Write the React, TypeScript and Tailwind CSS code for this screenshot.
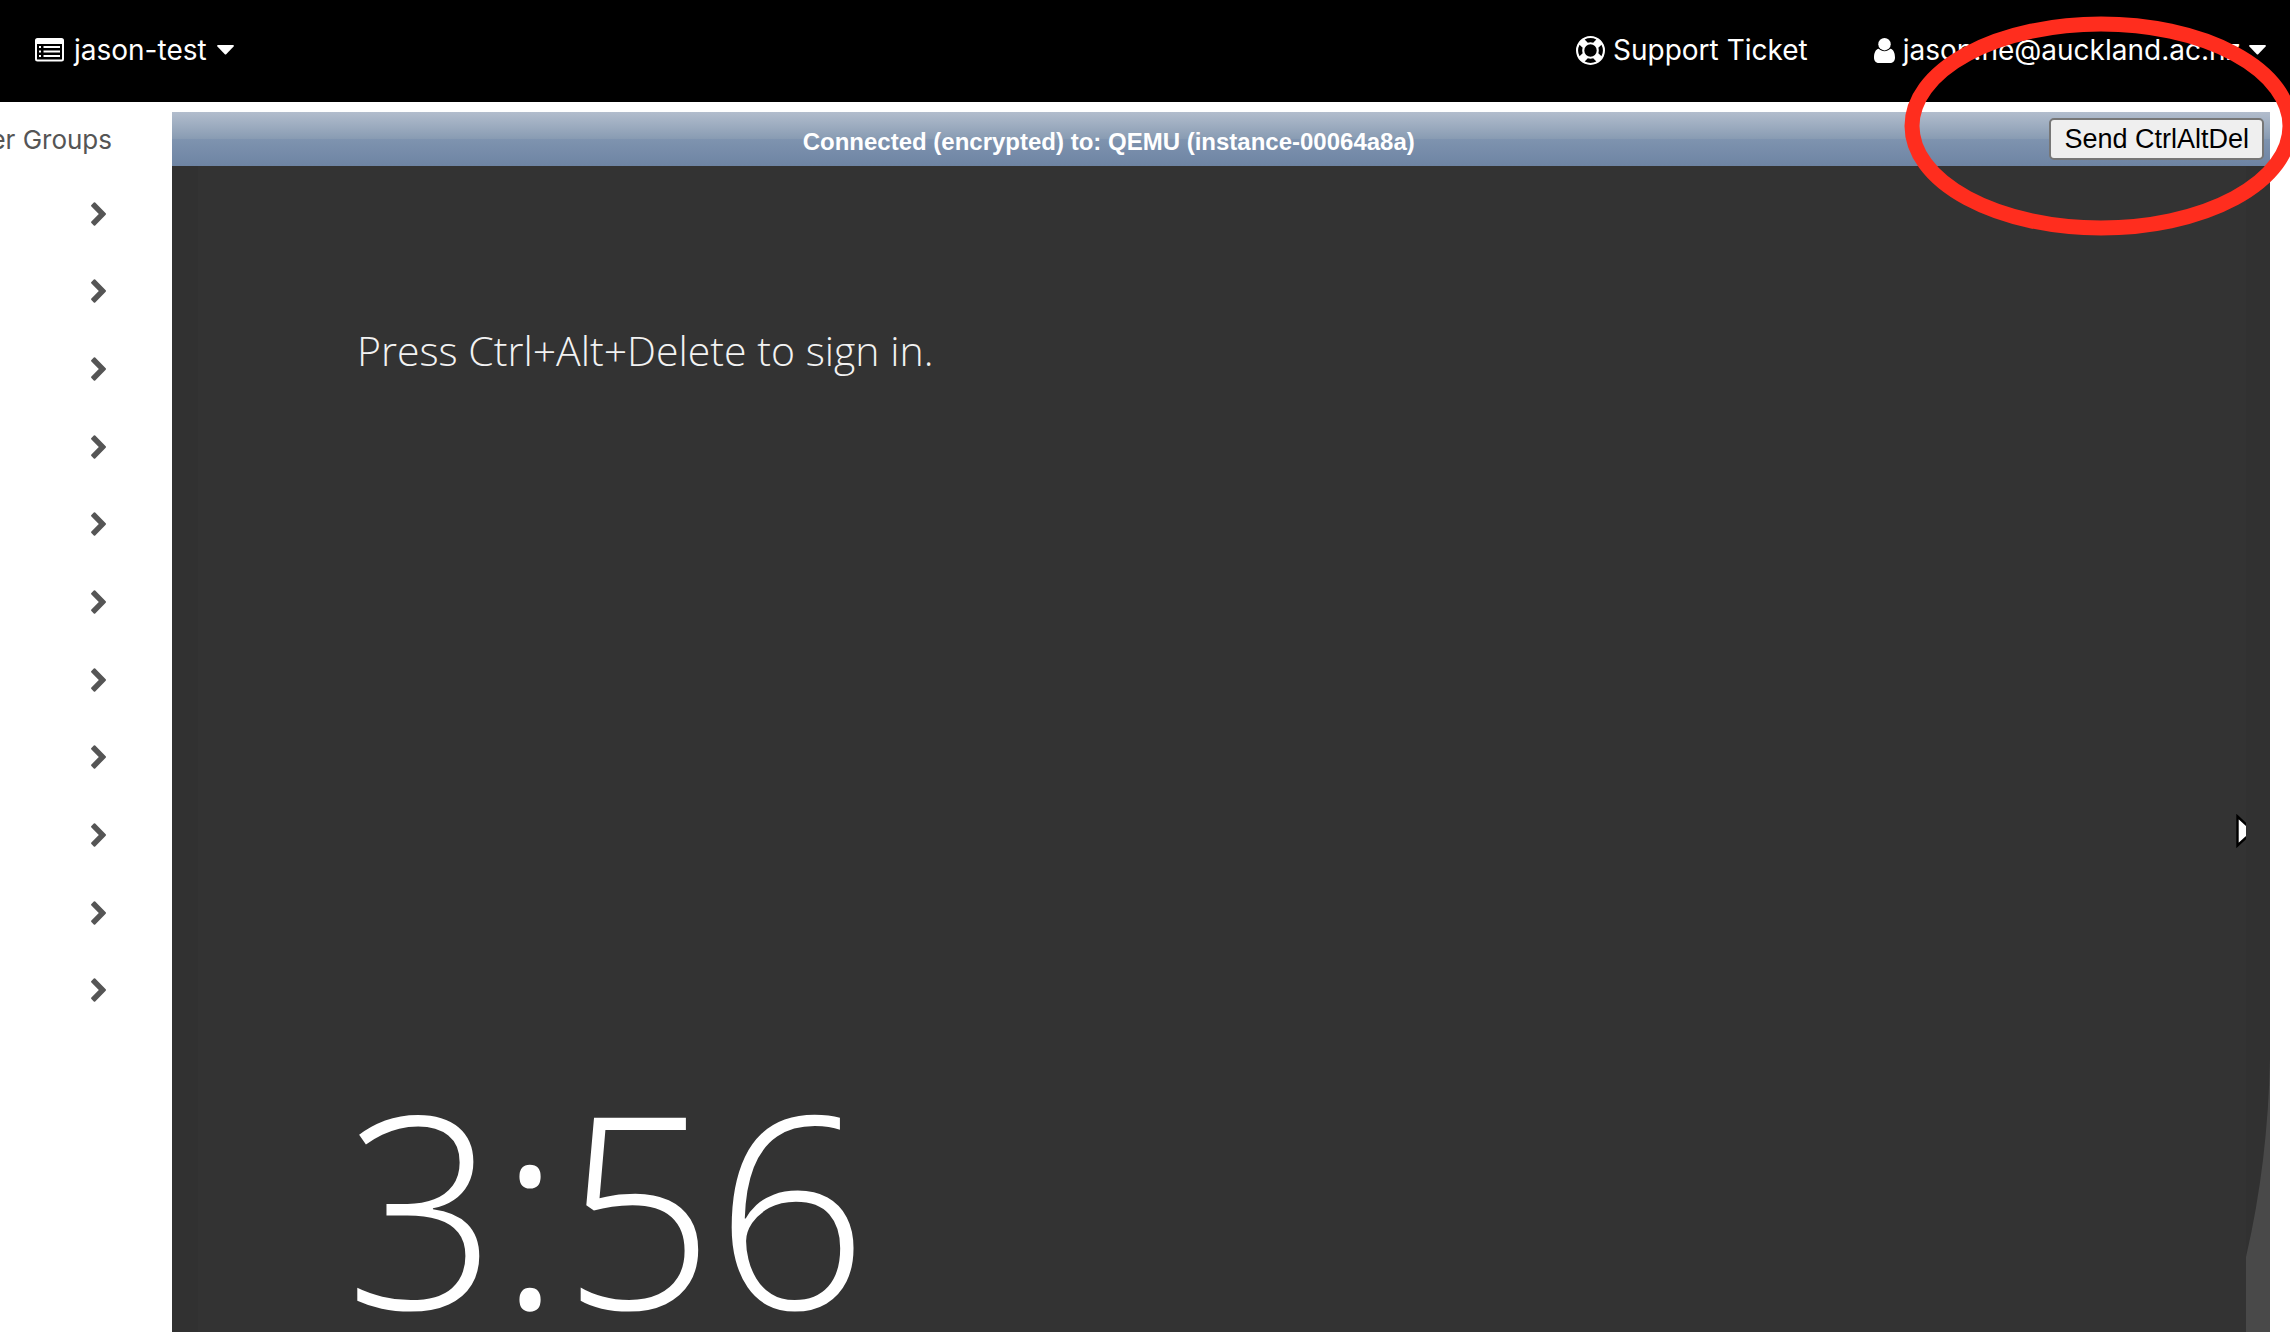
import React from "react";

const sidebarGroups = Array.from({ length: 11 }, (_, i) => i);

function ListIcon() {
  return (
    <svg viewBox="0 0 29 24" className="h-6 w-[29px]" fill="currentColor" aria-hidden="true">
      <path
        fillRule="evenodd"
        d="M2.500 0H26.500A2.500 2.500 0 0 1 29 2.500V21A2.500 2.500 0 0 1 26.500 23.500H2.500A2.500 2.500 0 0 1 0 21V2.500A2.500 2.500 0 0 1 2.500 0ZM2 6V21Q2 21.600 2.600 21.600H26.400Q27 21.600 27 21V6Z"
      />
      <path d="M4 8h2v2H4zM4 12.500h2v2H4zM4 17h2v2H4zM8.500 8h16.500v2H8.500zM8.500 12.500h16.500v2H8.500zM8.500 17h16.500v2H8.500z" />
    </svg>
  );
}

function LifeRingIcon() {
  return (
    <svg viewBox="0 0 1792 1792" className="h-[29px] w-[29px]" fill="currentColor" aria-hidden="true">
      <path d="M896 0q182 0 348 71t286 191 191 286 71 348-71 348-191 286-286 191-348 71-348-71-286-191-191-286-71-348 71-348 191-286 286-191 348-71zm0 128q-190 0-361 90l194 194q82-28 167-28t167 28l194-194q-171-90-361-90zm-678 1129l194-194q-28-82-28-167t28-167l-194-194q-90 171-90 361t90 361zm678 407q190 0 361-90l-194-194q-82 28-167 28t-167-28l-194 194q171 90 361 90zm0-384q159 0 271.500-112.500t112.500-271.500-112.500-271.500-271.500-112.500-271.500 112.500-112.500 271.500 112.500 271.500 271.500 112.500zm484-217l194 194q90-171 90-361t-90-361l-194 194q28 82 28 167t-28 167z" />
    </svg>
  );
}

function UserIcon() {
  return (
    <svg viewBox="0 0 21 25" className="h-[25px] w-[21px]" fill="currentColor" aria-hidden="true">
      <circle cx="10.500" cy="6.200" r="6.200" />
      <path d="M4.700 10.700C1.500 11.200 0 15 0 19.500C0 22.800 2 25 4.700 25H16.300C19 25 21 22.800 21 19.500C21 15 19.500 11.200 16.300 10.700C14.700 12.300 12.700 13.200 10.500 13.200S6.300 12.300 4.700 10.700Z" />
    </svg>
  );
}

function CaretIcon() {
  return (
    <svg viewBox="0 0 17 10" className="h-[10px] w-[17px]" fill="currentColor" aria-hidden="true">
      <path d="M1 0H16Q17.400 .3 16.600 1.500L9.200 9.200Q8.500 9.800 7.800 9.200L.4 1.500Q-.4 .3 1 0Z" />
    </svg>
  );
}

function ChevronIcon() {
  return (
    <svg viewBox="0 0 15 24" className="h-6 w-[15px]" fill="currentColor" aria-hidden="true">
      <path d="M2.800 .6Q3.500 0 4.200 .6L14.700 11.300Q15.300 12 14.700 12.700L4.200 23.400Q3.500 24 2.800 23.400L.4 20.900Q-.3 20.200 .4 19.500L7.800 12L.4 4.500Q-.3 3.800 .4 3.100Z" />
    </svg>
  );
}

function PointerIcon() {
  return (
    <svg viewBox="0 0 10 34" className="absolute right-0 top-[648px] h-[34px] w-[10px]" aria-hidden="true">
      <path d="M1.500 2.500L14 14V20L1.500 31.500Z" fill="#ffffff" stroke="#000000" strokeWidth="2.400" />
    </svg>
  );
}

function Highlight() {
  return (
    <svg
      viewBox="0 0 394 220"
      className="pointer-events-none absolute -right-2 top-4 z-10 h-[220px] w-[394px]"
      fill="none"
      stroke="#ff2d1e"
      strokeWidth="15"
      aria-hidden="true"
    >
      <ellipse cx="197" cy="110" rx="189" ry="102" />
    </svg>
  );
}

export default function App() {
  return (
    <div className="relative flex h-screen flex-col overflow-hidden bg-white font-['Inter',sans-serif]">
      <header className="flex h-[102px] shrink-0 items-center justify-between bg-black pb-[2px] pl-[35px] pr-6 text-[28px] leading-8 text-white">
        <button type="button" className="flex items-center gap-[10px]">
          <ListIcon />
          <span>jason-test</span>
          <CaretIcon />
        </button>
        <nav className="flex items-center gap-[66px]">
          <a href="#support" className="flex items-center gap-2">
            <LifeRingIcon />
            <span>Support Ticket</span>
          </a>
          <button type="button" className="flex items-center gap-2">
            <UserIcon />
            <span>jason.he@auckland.ac.nz</span>
            <CaretIcon />
          </button>
        </nav>
      </header>

      <div className="flex min-h-0 flex-1">
        <aside className="w-[172px] shrink-0 overflow-hidden text-[#555555]">
          <h2 className="flex h-[73px] items-center justify-end whitespace-nowrap pr-[60px] pt-[2px] text-[26px]">
            er Groups
          </h2>
          <ul className="grid h-[854px] auto-rows-fr pr-[66px]">
            {sidebarGroups.map((i) => (
              <li key={i} className="flex items-center justify-end">
                <button type="button" aria-label="Expand group">
                  <ChevronIcon />
                </button>
              </li>
            ))}
          </ul>
        </aside>

        <main className="mr-5 mt-[10px] flex min-w-0 flex-1 flex-col">
          <div className="grid h-[54px] shrink-0 grid-cols-[1fr_auto] items-center bg-[linear-gradient(to_bottom,#b2bdcd_0%,#899cb3_49%,#7e93af_51%,#6e84a3_100%)] pr-[6px] font-['Liberation_Sans',sans-serif]">
            <p className="pr-1 pt-[6px] text-center text-2xl font-bold text-white">
              Connected (encrypted) to: QEMU (instance-00064a8a)
            </p>
            <button
              type="button"
              className="h-[42px] rounded-[5px] border-2 border-[#767676] bg-[#efefef] px-[13px] text-[27px] leading-8 text-black"
            >
              Send CtrlAltDel
            </button>
          </div>
          <div className="flex min-h-0 flex-1 bg-[#313131]">
            <section className="relative ml-[26px] flex min-w-0 flex-1 flex-col justify-between bg-[#333333] pl-[147px] font-['Open_Sans',sans-serif] font-light">
              <p className="pl-3 pt-[154px] text-[41px] font-[350] leading-[60px] text-[#f2f2f2]">
                Press Ctrl+Alt+Delete to sign in.
              </p>
              <p className="pb-[6px] text-[268px] leading-[240px] text-white">3:56</p>
              <PointerIcon />
            </section>
            <div className="flex w-6 shrink-0 flex-col justify-end">
              <svg viewBox="0 0 24 300" className="h-[300px] w-6" fill="#494949" aria-hidden="true">
                <path d="M0 300V225Q22 130 24 26V300Z" />
              </svg>
            </div>
          </div>
        </main>
      </div>
      <Highlight />
    </div>
  );
}
